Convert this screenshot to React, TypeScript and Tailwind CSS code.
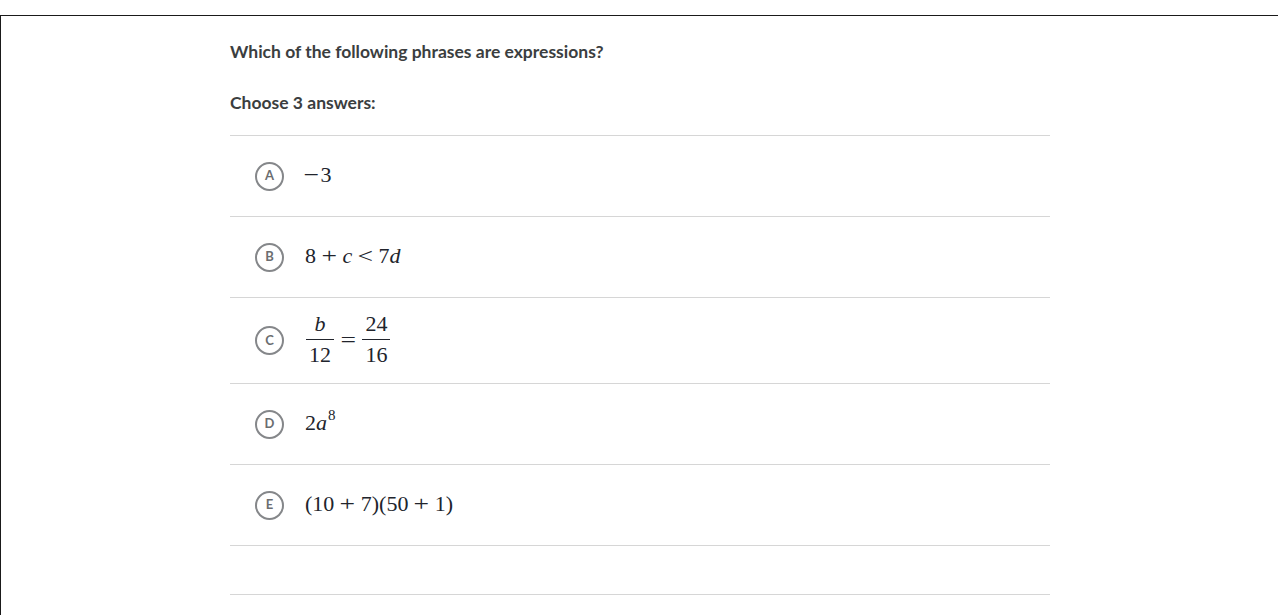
import React from "react";

const serif = "font-['Liberation_Serif','DejaVu_Serif',serif] text-[22px] leading-none text-[#21242c]";

const Frac = ({ top, bottom }: { top: React.ReactNode; bottom: React.ReactNode }) => (
  <span className="inline-flex flex-col items-center mx-[1px] leading-none">
    <span className="px-[3px] pb-[4px]">{top}</span>
    <span className="h-px w-full bg-[#21242c]" />
    <span className="px-[3px] pt-[4px]">{bottom}</span>
  </span>
);

const Op = ({ children }: { children: React.ReactNode }) => (
  <span className="mx-[7px] inline-block scale-x-125">{children}</span>
);

const Choice = ({
  letter,
  children,
  height,
}: {
  letter: string;
  children: React.ReactNode;
  height: string;
}) => (
  <div className={`flex items-center border-b border-[#d6d6d6] ${height}`}>
    <div className="ml-[25px] mr-[21px] flex h-[29px] w-[29px] items-center justify-center rounded-full border-2 border-[#85878a] text-[13px] font-bold text-[#6b6d70] font-['Lato',sans-serif]">
      {letter}
    </div>
    <div className={`flex items-center pb-[2px] ${serif}`}>{children}</div>
  </div>
);

export default function App() {
  return (
    <div className="h-[615px] w-[1278px] overflow-hidden bg-white">
      <div className="mt-[15px] h-[600px] border-t border-l border-[#1a1a1a] pl-[229px] pt-[24px] font-['Lato',sans-serif]">
        <div className="w-[820px]">
          <p className="text-[17.5px] leading-[24px] font-bold text-[#3b3e40]">
            Which of the following phrases are expressions?
          </p>
          <p className="mt-[27px] text-[17.5px] leading-[24px] font-bold text-[#3b3e40]">
            Choose 3 answers:
          </p>
          <div className="mt-[20px] border-t border-[#d6d6d6]">
            <Choice letter="A" height="h-[81px]">
              <span className="mr-[3px] inline-block scale-x-125">−</span>
              <span>3</span>
            </Choice>
            <Choice letter="B" height="h-[81px]">
              <span>8</span>
              <Op>+</Op>
              <i>c</i>
              <Op>&lt;</Op>
              <span>7</span>
              <i>d</i>
            </Choice>
            <Choice letter="C" height="h-[86px]">
              <Frac top={<i>b</i>} bottom="12" />
              <Op>=</Op>
              <Frac top="24" bottom="16" />
            </Choice>
            <Choice letter="D" height="h-[81px]">
              <span>2</span>
              <i>a</i>
              <sup className="text-[15px] -top-[8px] ml-[1px]">8</sup>
            </Choice>
            <Choice letter="E" height="h-[81px]">
              <span>(10</span>
              <Op>+</Op>
              <span>7)(50</span>
              <Op>+</Op>
              <span>1)</span>
            </Choice>
            <div className="h-[49px] border-b border-[#d6d6d6]" />
          </div>
        </div>
      </div>
    </div>
  );
}
